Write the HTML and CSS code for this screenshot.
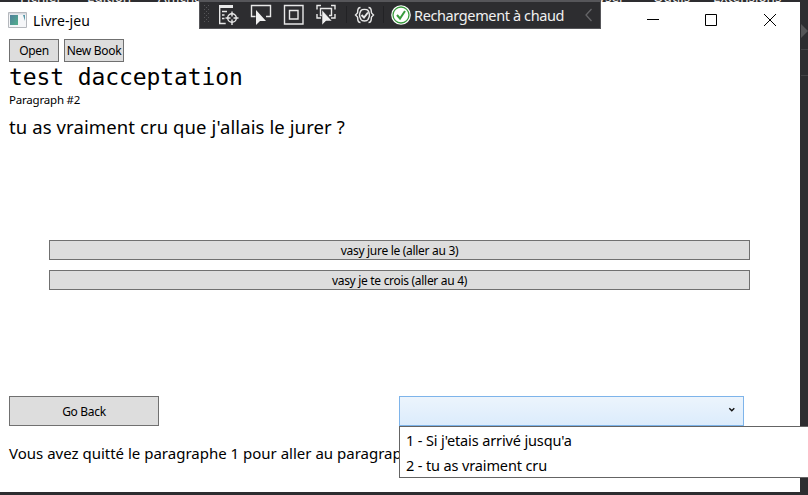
FILE: index.html
```
<!DOCTYPE html>
<html lang="fr">
<head>
<meta charset="utf-8">
<title>Livre-jeu</title>
<link rel="stylesheet" href="styles.css">
</head>
<body>
<div class="ide">
  <div class="menu"><span>Fichier</span><span>Édition</span><span>Affichage</span><span>Git</span><span>Projet</span><span>Générer</span><span>Déboguer</span><span>Test</span><span>Analyser</span><span>Outils</span><span>Extensions</span></div>
  <div class="workspace">
    <main class="window">
      <header class="titlebar">
        <svg class="app-icon" width="19" height="16" viewBox="0 0 19 16"><defs><linearGradient id="g" x2="1" y2="1"><stop stop-color="#4f7f9c"/><stop offset="1" stop-color="#52b08b"/></linearGradient></defs><path d="M.5.5h18v15H.5z" fill="#f5f6f8" stroke="#b5b8bd"/><path d="M1 1h17v1.500H1z" fill="#d5d8de"/><path d="M2 3h8v10H2z" fill="url(#g)"/><path d="M15 3h2v6z" fill="#5597a8"/></svg>
        <span class="title">Livre-jeu</span>
        <svg class="controls" width="140" height="14" viewBox="0 0 140 14" fill="none" stroke="#000"><path d="M0 8.500h12M58.500 3.500h11v11h-11zM117 3l12 12M129 3l-12 12" transform="translate(0 -2)"/></svg>
      </header>
      <div class="file-actions"><button class="open">Open</button><button class="new">New Book</button></div>
      <h1>test dacceptation</h1>
      <p class="number">Paragraph #2</p>
      <p class="body-text">tu as vraiment cru que j'allais le jurer ?</p>
      <div class="choices"><button>vasy jure le (aller au 3)</button><button>vasy je te crois (aller au 4)</button></div>
      <div class="history"><button class="back">Go Back</button>
        <div class="combo"><svg width="8" height="6" viewBox="0 0 8 6" fill="none" stroke="#111" stroke-width="1.400"><path d="M1.300 1.200L3.800 3.700 6.300 1.200"/></svg>
          <ul class="options"><li>1 - Si j'etais arrivé jusqu'a</li><li>2 - tu as vraiment cru</li></ul>
        </div>
      </div>
      <p class="status">Vous avez quitté le paragraphe 1 pour aller au paragraphe 2</p>
    </main>
    <svg class="side" width="8" height="490" viewBox="0 0 8 490"><path d="M1 22l7 7-7 7z" fill="#555557"/><path d="M1 47.500h7M1 73.500h7" stroke="#424245"/></svg>
  </div>
  <div class="debugbar">
    <svg width="190" height="26" viewBox="200 2 190 26" fill="none" stroke="#e8e8e8" stroke-width="1.400">
      <path fill="#555558" stroke="none" d="M204 5h1v1h-1zm4 0h1v1h-1zm-2 2h1v1h-1zm-2 2h1v1h-1zm4 0h1v1h-1zm-2 2h1v1h-1zm-2 2h1v1h-1zm4 0h1v1h-1zm-2 2h1v1h-1zm-2 2h1v1h-1zm4 0h1v1h-1zm-2 2h1v1h-1zm-2 2h1v1h-1zm4 0h1v1h-1z"/>
      <path d="M219 6.500h14" stroke-width="3"/><path d="M219.700 7v16.500h6M222 11.500h5M222 15h2.500M222 18.500h2.500"/><circle cx="232" cy="18" r="4.300"/><path d="M232 11.500v5M232 19.500V25M225.500 18h5M233.500 18h5"/>
      <path d="M255.500 16.500h-4v-11h19v11H266"/><path d="M256 10v15l4-4h6z" fill="#f0f0f0" stroke="none"/>
      <path d="M284.500 5.500h18.500v18.500h-18.500zM289.500 10.500h8.500v8.500h-8.500z"/>
      <path d="M317 9.500v-4h4M331 5.500h4v4M317 14v4h4M331 18h4v-4M322 15.500h-1.500v-7h11v7H329"/><path d="M322 10v15l4-4h6z" fill="#f0f0f0" stroke="#2d2d30" stroke-width=".5"/>
      <path d="M346.500 6v17M383.500 6v17" stroke="#222225" stroke-width="1"/>
      <path d="M360.500 7.500c-3.500 0-2.500 3-3 5.500l-2 2 2 2c.5 2.500-.5 5.500 3 5.500M368.500 7.500c3.500 0 2.500 3 3 5.500l2 2-2 2c-.5 2.500.5 5.500-3 5.500"/><path d="M361 10.500c1-1.500 6-1.500 7 0M361 19.500c1 2 6 2 7 0M361 10.500c-2 3-2 6 0 9M368 10.500c2 3 2 6 0 9"/><path d="M361.500 15l2.500 2.500 4-5" stroke-width="2"/>
    </svg>
    <svg class="check" width="22" height="24" viewBox="0 0 22 24"><circle cx="11" cy="12" r="9.800" fill="#fff"/><circle cx="11" cy="12" r="8" fill="#fff" stroke="#389b3d" stroke-width="1.300"/><path d="M7 12l3 3.500L15 8" fill="none" stroke="#389b3d" stroke-width="2"/></svg>
    <span class="reload">Rechargement à chaud</span>
    <svg class="collapse" width="8" height="14" viewBox="0 0 8 14" fill="none" stroke="#656568" stroke-width="1.300"><path d="M6.500 1L1 7l5.500 6"/></svg>
  </div>
</div>
</body>
</html>
```
FILE: styles.css
```
* { box-sizing: border-box; }
body { margin: 0; font-family: "Noto Sans", "Open Sans", sans-serif; font-size: 12px; color: #000; overflow: hidden; }
h1, p, ul { margin: 0; padding: 0; font-weight: 400; white-space: nowrap; }
.ide { position: relative; width: 808px; height: 495px; background: #2d2d30; overflow: hidden; }
.menu { height: 2px; overflow: hidden; display: grid; grid-template-columns: 67px 71px 90px 42px 65px 75px 92px 48px 83px 60px 75px; padding-left: 20px; color: #eee; font-size: 13.5px; line-height: 2px; }
.menu span { position: relative; top: -4px; }
.workspace { display: flex; }
.window { width: 800px; height: 490px; background: #fff; flex: none; display: flex; flex-direction: column; }
.side { display: block; }
.titlebar { height: 37px; flex: none; display: flex; align-items: flex-start; padding-left: 8px; }
.app-icon { margin-top: 10px; }
.title { font-size: 14px; line-height: 20px; letter-spacing: .1px; margin: 9px 0 0 6px; }
.controls { margin: 11px 13px 0 auto; }
button { font: inherit; font-size: 12px; letter-spacing: -.3px; background: #ddd; border: 1px solid #707070; border-radius: 0; padding: 0; color: #000; white-space: nowrap; display: flex; align-items: center; justify-content: center; }
.file-actions { display: flex; gap: 5px; height: 23px; flex: none; padding-left: 9px; }
.open { width: 50px; }
.new { width: 60px; }
h1 { font-family: "DejaVu Sans Mono", monospace; font-size: 23px; letter-spacing: -.1px; line-height: 30px; height: 30px; padding-left: 9px; }
.number { font-size: 11.5px; letter-spacing: -.2px; line-height: 16px; padding-left: 9px; }
.body-text { font-size: 18.5px; letter-spacing: .1px; line-height: 26px; margin-top: 6px; padding-left: 9px; }
.choices { display: grid; gap: 10px; margin: 100px 50px 0 49px; }
.choices button { height: 20px; padding-top: 1px; }
.history { display: flex; margin: 106px 0 0 9px; }
.back { width: 150px; height: 30px; }
.combo { position: relative; width: 345px; height: 30px; margin-left: 240px; border: 1px solid #7eb4ea; background: linear-gradient(#ecf4fc, #dcecfc); display: flex; align-items: center; justify-content: flex-end; padding: 0 7px 2px 0; }
.options { position: absolute; left: -1px; top: 29px; width: 420px; height: 52px; background: #fff; border: 1px solid #646464; list-style: none; padding: 1px 0 0 6px; font-size: 14.5px; letter-spacing: -.13px; line-height: 25px; }
.status { font-size: 15px; line-height: 22px; margin: 16px 0 0 9px; }
.debugbar { position: absolute; left: 199px; top: 0; width: 402px; height: 29px; border: 1px solid #56565a; background: #2d2d30; border-top: 2px solid #56565a; display: flex; align-items: center; color: #f0f0f0; }
.reload { font-size: 14.5px; letter-spacing: -.38px; margin-left: 2px; white-space: nowrap; }
.collapse { margin: 0 7px 0 auto; }
```
